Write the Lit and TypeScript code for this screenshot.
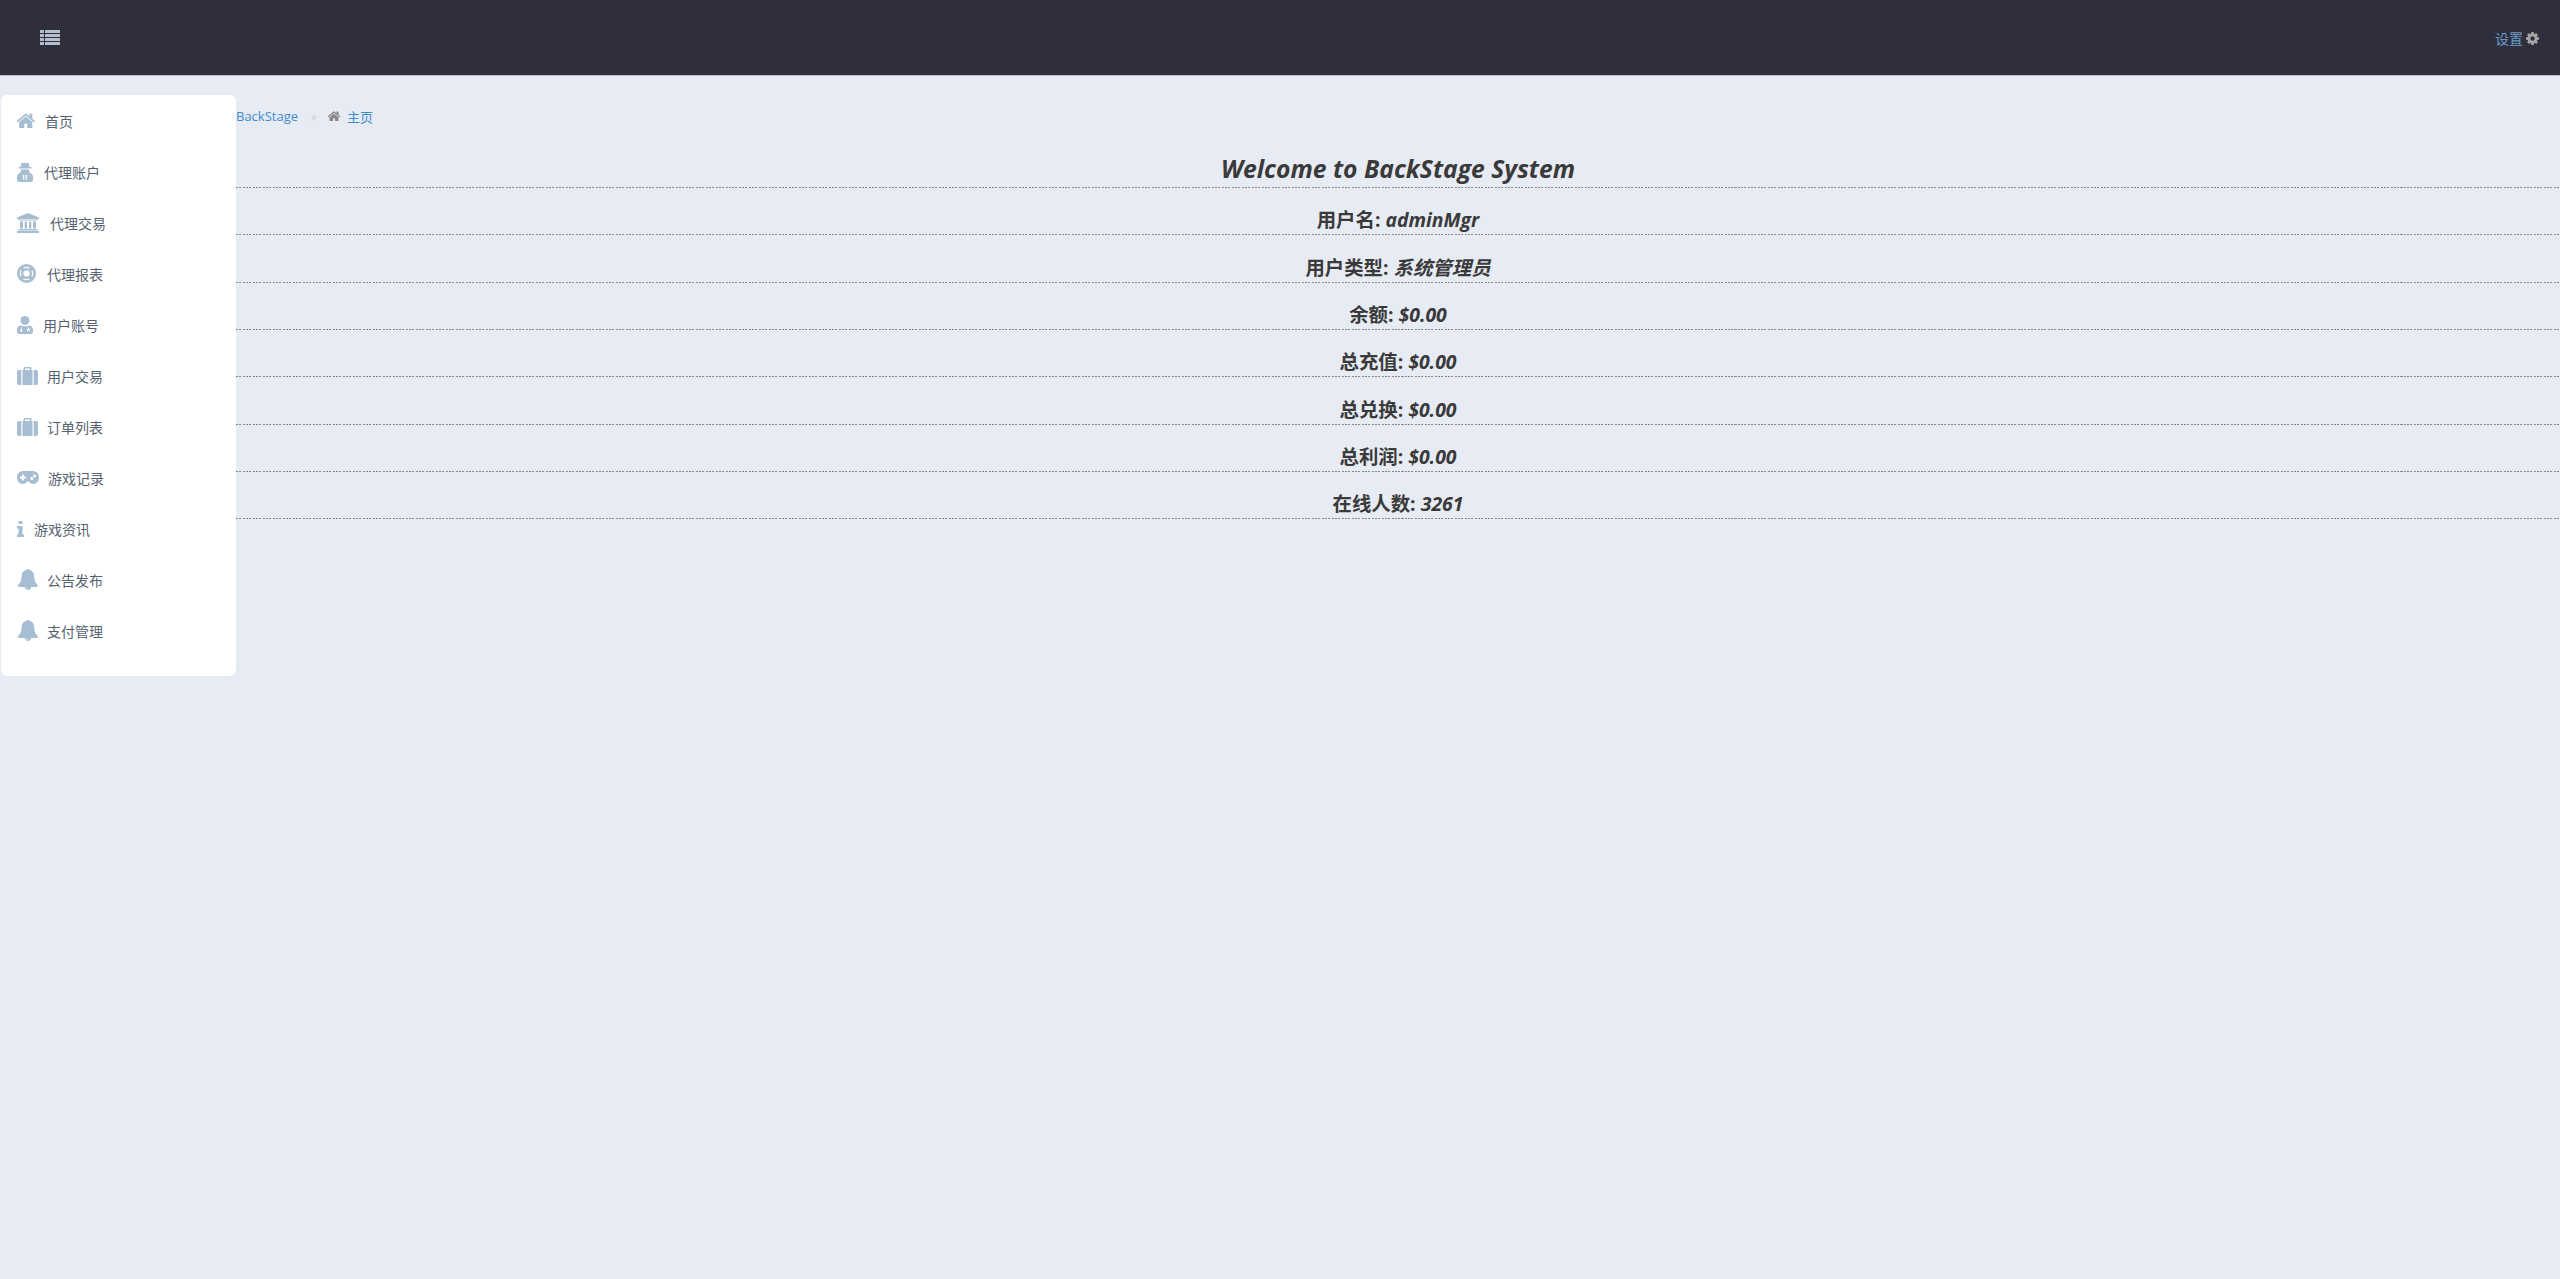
import { LitElement, css, html, svg } from "lit";
import { customElement } from "lit/decorators.js";

// icon drawings, 1792 grid unless a viewBox is given
const icons: Record<string, { w: number; box: string; body: unknown }> = {
	home: {
		w: 19,
		box: "64 200 1664 1340",
		body: svg`<path d="M1408 992v480q0 26-19 45t-45 19h-384v-384h-256v384h-384q-26 0-45-19t-19-45v-480q0-1 .5-3t.5-3l575-474 575 474q1 2 1 6zm223-69l-62 74q-8 9-21 11h-3q-13 0-21-7l-692-577-692 577q-12 8-24 7-13-2-21-11l-62-74q-8-10-7-23.500t11-21.500l719-599q32-26 76-26t76 26l244 204v-195q0-14 9-23t23-9h192q14 0 23 9t9 23v408l219 182q10 8 11 21.500t-7 23.500z"/>`,
	},
	secret: {
		w: 16,
		box: "0 0 16 20",
		body: svg`<path d="M4.500.5L6.500 1.200 8 .8 9.500 1.200 11.500 .5 12.500 5H14.500V6.500H1.500V5H3.500Z"/><path fill-rule="evenodd" d="M4 7.500H12V9C12.500 10 13 11 14 11.500 15.300 12 16 13 16 15V18C16 19.200 15.200 20 14 20H2C.8 20 0 19.200 0 18V15C0 13 .7 12 2 11.500 3 11 3.500 10 4 9ZM5.500 13L6.500 18H7.300V13ZM8.700 13V18H9.500L10.500 13Z"/>`,
	},
	bank: {
		w: 22,
		box: "0 0 22 20",
		body: svg`<path d="M11 0L22 4.500V6H0V4.500Z"/><path d="M1 6.500H21V7.500H1ZM3 8.500H6V15.500H3ZM7.700 8.500H10V15.500H7.700ZM12 8.500H14.300V15.500H12ZM16 8.500H19V15.500H16ZM1.500 16H20.500V17.500H1.500ZM0 18H22V20H0Z"/>`,
	},
	ring: {
		w: 19,
		box: "0 0 20 20",
		body: svg`<g fill="none" stroke="currentColor"><circle cx="10" cy="10" r="8.600" stroke-width="2.800"/><circle cx="10" cy="10" r="4.600" stroke-width="2.400"/><path d="M3.500 3.500L6.700 6.700M16.500 3.500L13.300 6.700M3.500 16.500L6.700 13.300M16.500 16.500L13.300 13.300" stroke-width="3.600"/></g>`,
	},
	doctor: {
		w: 16,
		box: "0 0 16 18",
		body: svg`<circle cx="8" cy="4.500" r="4.500"/><path fill-rule="evenodd" d="M3.500 9.500C5 10.600 11 10.600 12.500 9.500C14.800 9.800 16 11.400 16 14V15.500C16 17 15 18 13.800 18H2.200C1 18 0 17 0 15.500V14C0 11.400 1.200 9.800 3.500 9.500ZM4 11.500V13.500H3.200V15.500H5.200V13.500H4.800V11.500ZM11 11.500V13H10V15.500H10.800V14H12.200V15.500H13V13H12V11.500Z"/>`,
	},
	suitcase: {
		w: 21,
		box: "0 0 21 18",
		body: svg`<path fill-rule="evenodd" d="M6.500 3V1.500C6.500.7 7.200 0 8 0H13C13.800 0 14.500.7 14.500 1.500V3H15.500V18H5.500V3ZM8 3H13V1.500H8Z"/><path d="M0 5C0 3.900.9 3 2 3H4.300V18H2C.9 18 0 17.100 0 16ZM16.700 3H19C20.100 3 21 3.900 21 5V16C21 17.100 20.100 18 19 18H16.700Z"/>`,
	},
	gamepad: {
		w: 22,
		box: "0 0 22 13",
		body: svg`<path fill-rule="evenodd" d="M6 0H16C19.500 0 22 2.800 22 6.500S19.500 13 16 13C14 13 12.800 11.800 12 10.500H10C9.200 11.800 8 13 6 13C2.500 13 0 10.200 0 6.500S2.500 0 6 0ZM5 3.500V5.500H3V7.500H5V9.500H7V7.500H9V5.500H7V3.500ZM14.800 6A1.500 1.500 0 1 0 14.800 9A1.500 1.500 0 1 0 14.800 6ZM17.500 3.500A1.500 1.500 0 1 0 17.500 6.500A1.500 1.500 0 1 0 17.500 3.500Z"/>`,
	},
	info: {
		w: 7,
		box: "0 0 7 16",
		body: svg`<path d="M1.500 0H5.500V3H1.500ZM0 5H5.500V13.500H7V16H0V13.500H1.500V7.500H0Z"/>`,
	},
	bell: {
		w: 21,
		box: "-64 64 1728 1664",
		body: svg`<path d="M912 1696q0-16-16-16-59 0-101.500-42.500t-42.500-101.500q0-16-16-16t-16 16q0 73 51.500 124.500t124.500 51.500q16 0 16-16zm816-288q0 52-38 90t-90 38h-448q0 106-75 181t-181 75-181-75-75-181h-448q-52 0-90-38t-38-90q50-42 91-88t85-119.500 74.500-158.500 50-206 19.500-260q0-152 117-282.500t307-158.500q-8-19-8-39 0-40 28-68t68-28 68 28 28 68q0 20-8 39 190 28 307 158.500t117 282.500q0 139 19.500 260t50 206 74.500 158.500 85 119.500 91 88z" transform="translate(-64 0)"/>`,
	},
	cog: {
		w: 13,
		box: "128 128 1536 1536",
		body: svg`<path d="M1152 896q0-106-75-181t-181-75-181 75-75 181 75 181 181 75 181-75 75-181zm512-109v222q0 12-8 23t-20 13l-185 28q-19 54-39 91 35 50 107 138 10 12 10 25t-9 23q-27 37-99 108t-94 71q-12 0-26-9l-138-108q-44 23-91 38-16 136-29 186-7 28-36 28h-222q-14 0-24.500-8.500t-11.500-21.500l-28-184q-49-16-90-37l-141 107q-10 9-25 9-14 0-25-11-126-114-165-168-7-10-7-23 0-12 8-23 15-21 51-66.500t54-70.500q-27-50-41-99l-183-27q-13-2-21-12.500t-8-23.500v-222q0-12 8-23t19-13l186-28q14-46 39-92-40-57-107-138-10-12-10-24 0-10 9-23 26-36 98.500-107.500t94.500-71.500q13 0 26 10l138 107q44-23 91-38 16-136 29-186 7-28 36-28h222q14 0 24.500 8.500t11.500 21.500l28 184q49 16 90 37l142-107q9-9 24-9 13 0 25 10 129 119 165 170 7 8 7 22 0 12-8 23-15 21-51 66.500t-54 70.500q26 50 41 98l183 28q13 2 21 12.500t8 23.500z"/>`,
	},
};

function icon(name: string, width?: number) {
	const i = icons[name];
	return html`<svg class="icon" width=${width ?? i.w} viewBox=${i.box} fill="currentColor" aria-hidden="true">${i.body}</svg>`;
}

const menu = [
	["home", "首页", 9],
	["secret", "代理账户", 11],
	["bank", "代理交易", 11],
	["ring", "代理报表", 11],
	["doctor", "用户账号", 10],
	["suitcase", "用户交易", 9],
	["suitcase", "订单列表", 9],
	["gamepad", "游戏记录", 9],
	["info", "游戏资讯", 10],
	["bell", "公告发布", 9],
	["bell", "支付管理", 9],
] as const;

const stats = [
	["用户名:", "adminMgr"],
	["用户类型:", "系统管理员"],
	["余额:", "$0.00"],
	["总充值:", "$0.00"],
	["总兑换:", "$0.00"],
	["总利润:", "$0.00"],
	["在线人数:", "3261"],
];

@customElement("app-root")
export class AppRoot extends LitElement {
	static styles = css`
		:host {
			display: block;
			min-height: 1279px;
			background: #e7ebf3;
			font-family: "Open Sans", "Noto Sans CJK SC", sans-serif;
			color: #333;
		}

		.navbar {
			display: flex;
			align-items: center;
			justify-content: space-between;
			box-sizing: border-box;
			height: 76px;
			padding: 0 21px 0 40px;
			background: #2e2e3c;
			border-bottom: 1px solid #b9bfcc;
		}

		.toggle {
			display: flex;
			gap: 1px;
			width: 20px;
			height: 16px;
		}

		.toggle .dots,
		.toggle .bars {
			background: repeating-linear-gradient(#b4bfcb 0 3px, #2e2e3c 3px 4px);
		}

		.toggle .dots {
			width: 4px;
		}

		.toggle .bars {
			flex: 1;
		}

		.settings {
			display: flex;
			align-items: center;
			gap: 3px;
			font-size: 14px;
			color: #6b9dc9;
		}

		.settings .icon {
			margin-top: 1px;
			color: #a5a5a8;
		}

		.page {
			display: flex;
			align-items: flex-start;
			padding: 19px 0 0 1px;
		}

		.sidebar {
			flex: none;
			box-sizing: border-box;
			width: 235px;
			height: 581px;
			padding: 0 0 0 16px;
			background: #fff;
			border-radius: 6px;
		}

		.item {
			display: flex;
			align-items: center;
			height: 51px;
			font-size: 14px;
			color: #566270;
		}

		.item .icon {
			flex: none;
			color: #a7bed2;
		}

		.main {
			flex: 1;
			min-width: 0;
		}

		.crumbs {
			display: flex;
			align-items: center;
			height: 42px;
			font-size: 13px;
			color: #428bca;
		}

		.crumbs .sep {
			margin: 0 11px 0 13px;
			font-size: 12px;
			color: #ccd0d8;
		}

		.crumbs .icon {
			margin-right: 6px;
			color: #8a8a8a;
		}

		.row {
			box-sizing: border-box;
			height: 47.33px;
			margin: 0;
			padding-top: 17.33px;
			font-size: 19.4px;
			font-weight: 700;
			line-height: 29px;
			text-align: center;
			color: #3a3a3a;
			background: repeating-linear-gradient(90deg, #85878c 0 2px, transparent 2px 3.33px) left bottom / 100% 1px no-repeat;
		}

		.row em {
			font-style: italic;
		}

		.row.title {
			height: 51px;
			padding-top: 13px;
			line-height: 37px;
			font-size: 24.7px;
			font-style: italic;
		}
	`;

	render() {
		return html`
			<header class="navbar">
				<div class="toggle"><span class="dots"></span><span class="bars"></span></div>
				<div class="settings">设置 ${icon("cog")}</div>
			</header>
			<div class="page">
				<nav class="sidebar">
					${menu.map(
						([name, label, gap]) => html`<div class="item">
							${icon(name)}<span style="margin-left:${gap}px">${label}</span>
						</div>`,
					)}
				</nav>
				<main class="main">
					<div class="crumbs">
						<span>BackStage</span>
						<span class="sep">»</span>
						${icon("home", 13)}
						<span>主页</span>
					</div>
					<h1 class="row title">Welcome to BackStage System</h1>
					${stats.map(([label, value]) => html`<div class="row">${label} <em>${value}</em></div>`)}
				</main>
			</div>
		`;
	}
}
